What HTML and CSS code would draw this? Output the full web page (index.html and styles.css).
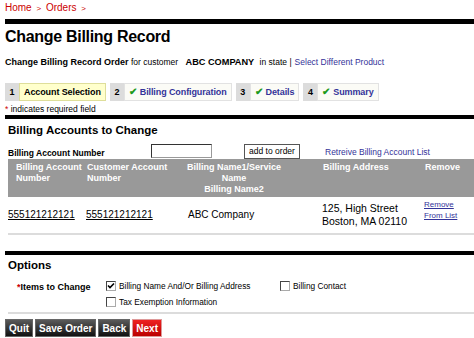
FILE: index.html
```html
<!DOCTYPE html>
<html lang="en">

<head>
    <meta charset="UTF-8">
    <title>Change Billing Record</title>
    <link rel="stylesheet" href="styles.css">
</head>

<body>
    <div class="crumbs">
        <a href="#">Home</a> <span class="sep">&gt;</span> <a href="#">Orders</a> <span class="sep">&gt;</span>
    </div>

    <div class="bar"></div>
    <h1>Change Billing Record</h1>

    <p class="sub">
        <b>Change Billing Record Order</b> for customer <b class="cust">ABC COMPANY</b> in state |<a href="#">Select Different Product</a>
    </p>

    <div class="steps">
        <div class="step active"><span class="num">1</span><span class="label">Account Selection</span></div>
        <div class="step"><span class="num">2</span><span class="label"><i class="tick">&#10004;</i>Billing Configuration</span></div>
        <div class="step"><span class="num">3</span><span class="label"><i class="tick">&#10004;</i>Details</span></div>
        <div class="step"><span class="num">4</span><span class="label"><i class="tick">&#10004;</i>Summary</span></div>
    </div>

    <p class="req"><span class="star">*</span> indicates required field</p>

    <div class="bar thin"></div>
    <h2>Billing Accounts to Change</h2>

    <div class="addrow">
        <label class="addlabel">Billing Account Number</label>
        <input class="acct" type="text">
        <button class="add">add to order</button>
        <a class="retrieve" href="#">Retreive Billing Account List</a>
    </div>

    <div class="grid head">
        <div class="c1">Billing Account<br>Number</div>
        <div class="c2">Customer Account<br>Number</div>
        <div class="c3">Billing Name1/Service<br>Name<br>Billing Name2</div>
        <div class="c4">Billing Address</div>
        <div class="c5">Remove</div>
    </div>
    <div class="grid row">
        <div class="c1"><a href="#">555121212121</a></div>
        <div class="c2"><a href="#">555121212121</a></div>
        <div class="c3">ABC Company</div>
        <div class="c4">125, High Street<br>Boston, MA 02110</div>
        <div class="c5"><a href="#">Remove<br>From List</a></div>
    </div>

    <div class="rule"></div>

    <div class="bar thin opt"></div>
    <h2 class="opthead">Options</h2>

    <div class="options">
        <div class="optlabel"><span class="star">*</span>Items to Change</div>
        <div class="checks">
            <label class="chk"><span class="box"><svg width="8" height="8" viewBox="0 0 8 8"><polyline points="1,3.5 3,5.5 7,1.5" fill="none" stroke="#000" stroke-width="1.6"/></svg></span>Billing Name And/Or Billing Address</label>
            <label class="chk"><span class="box"></span>Billing Contact</label>
            <label class="chk"><span class="box"></span>Tax Exemption Information</label>
        </div>
    </div>

    <div class="rule"></div>

    <div class="buttons">
        <button class="btn">Quit</button>
        <button class="btn">Save Order</button>
        <button class="btn">Back</button>
        <button class="btn next">Next</button>
    </div>
</body>

</html>
```

FILE: styles.css
```css
* {
    box-sizing: border-box;
}

body {
    margin: 0;
    padding: 0 0 0 5px;
    font-family: "Liberation Sans", Arial, sans-serif;
    font-size: 8.5px;
    color: #000;
    background: #fff;
}

a {
    color: #333399;
    text-decoration: none;
}

.crumbs {
    height: 19px;
    padding-top: 2px;
    font-size: 10px;
}

.crumbs a {
    color: #cc0000;
}

.crumbs .sep {
    color: #cc0000;
    font-size: 8px;
    margin: 0 2px;
}

.bar {
    height: 5px;
    background: #000;
}

.bar.thin {
    height: 4px;
}

h1 {
    margin: 0;
    height: 33px;
    padding-top: 3px;
    font-size: 16px;
    line-height: 19px;
    letter-spacing: -0.3px;
}

.sub {
    margin: 0;
    height: 26px;
    line-height: 11px;
}

.sub b {
    font-size: 9px;
}

.sub .cust {
    font-size: 9.2px;
    margin: 0 3px 0 5px;
}

.sub a {
    margin-left: 3px;
}

.steps {
    display: flex;
    gap: 4px;
    height: 18px;
}

.step {
    display: flex;
    font-weight: bold;
    font-size: 9px;
    letter-spacing: -0.1px;
}

.step .num {
    width: 14px;
    background: #dcdcdc;
    text-align: center;
    line-height: 18px;
}

.step .label {
    padding: 0 4px;
    line-height: 16px;
    border: 1px solid #e2e2e2;
    background: #fbfbf6;
    color: #333399;
}

.step.active .label {
    background: #ffffcc;
    border-color: #dede9a;
    color: #000;
}

.tick {
    font-style: normal;
    color: #1d9a1d;
    font-size: 10px;
    margin-right: 3px;
}

.req {
    margin: 0;
    height: 14px;
    padding-top: 3px;
    line-height: 10px;
}

.star {
    color: #cc0000;
}

h2 {
    margin: 0 0 0 3px;
    height: 24px;
    padding-top: 4px;
    font-size: 11.5px;
    line-height: 14px;
}

.addrow {
    display: flex;
    align-items: center;
    height: 16px;
    margin-left: 3px;
}

.addlabel {
    width: 143px;
    font-weight: bold;
    padding-top: 3px;
}

.acct {
    width: 61px;
    height: 14px;
    margin: 0;
    padding: 0;
    border: 1px solid #999;
    border-top-color: #333;
    border-left-color: #333;
}

.add {
    margin: 0 0 0 32px;
    width: 56px;
    height: 15px;
    padding: 0;
    font-family: "Liberation Sans", Arial, sans-serif;
    font-size: 8.5px;
    background: #fff;
    border: 1px solid #555;
}

.retrieve {
    margin-left: 25px;
    padding-top: 2px;
}

.grid {
    display: grid;
    grid-template-columns: 78px 78px 140px 119px 1fr;
    margin-left: 3px;
}

.head {
    height: 38px;
    background: #999999;
    color: #fff;
    font-weight: bold;
    font-size: 9px;
    line-height: 11px;
    padding-top: 3px;
    white-space: nowrap;
}

.head .c1 {
    padding-left: 8px;
}

.head .c2 {
    padding-left: 1px;
}

.head .c3 {
    text-align: center;
}

.head .c4 {
    padding-left: 19px;
}

.head .c5 {
    padding-left: 2px;
}

.row {
    height: 36px;
    font-size: 10px;
    line-height: 13px;
    padding-top: 5px;
}

.row .c1,
.row .c2,
.row .c3 {
    padding-top: 6px;
}

.row .c1 a,
.row .c2 a {
    color: #000;
    text-decoration: underline;
}

.row .c3 {
    padding-left: 24px;
}

.row .c4 {
    padding-left: 18px;
    font-size: 10.5px;
}

.row .c5 {
    padding-left: 1px;
    padding-top: 0;
    margin-top: -3px;
    font-size: 8px;
    line-height: 11px;
}

.row .c5 a {
    text-decoration: underline;
}

.rule {
    height: 2px;
    background: #dcdcdc;
    margin-left: 3px;
}

.opt {
    margin-top: 16px;
}

.opthead {
    height: 22px;
    padding-top: 3px;
}

.options {
    display: flex;
    height: 35px;
    padding-top: 3px;
    margin-left: 3px;
}

.optlabel {
    width: 98px;
    padding: 2px 0 0 9px;
    font-weight: bold;
    font-size: 9px;
}

.checks {
    display: grid;
    grid-template-columns: 174px auto;
    row-gap: 5px;
    align-content: start;
}

.chk {
    display: flex;
    align-items: center;
    height: 11px;
    font-size: 8.3px;
}

.box {
    display: inline-flex;
    align-items: center;
    justify-content: center;
    width: 10px;
    height: 10px;
    margin-right: 3px;
    border: 1px solid #aaa;
    border-top-color: #444;
    border-left-color: #444;
    background: #fff;
}

.buttons {
    display: flex;
    gap: 2px;
    padding-top: 5px;
}

.btn {
    height: 18px;
    padding: 0 3px;
    border: 1px solid #666;
    background: linear-gradient(#5a5a5a, #111);
    color: #fff;
    font-family: "Liberation Sans", Arial, sans-serif;
    font-weight: bold;
    font-size: 10px;
}

.btn.next {
    background: linear-gradient(#ee2222, #bb0000);
    border-color: #d99;
}
```
